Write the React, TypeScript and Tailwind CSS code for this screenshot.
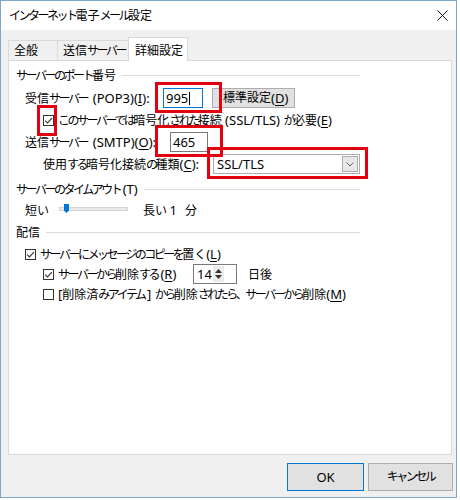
import React from "react"

const KANA = /[\u3040-\u30ff\u3001]/
const KANJI = /[\u4e00-\u9fff]/

// Japanese runs: kana are drawn narrower, like Yu Gothic UI
function J({ t }: { t: string }) {
  const parts = t.split(/([\u3040-\u30ff\u3001]+|[\u4e00-\u9fff]+)/).filter(Boolean)
  return (
    <>
      {parts.map((p, i) => {
        if (KANA.test(p)) {
          const next = parts[i + 1]
          const open = next !== undefined && !KANA.test(next) && !KANJI.test(next)
          return (
            <span key={i} className={open ? "mr-[2.5px] text-[12px] tracking-[-2.5px]" : "text-[12px] tracking-[-2.5px]"}>
              {p}
            </span>
          )
        }
        if (KANJI.test(p)) {
          return (
            <span key={i} className="text-[12px]">
              {p}
            </span>
          )
        }
        return <React.Fragment key={i}>{p}</React.Fragment>
      })}
    </>
  )
}

function Acc({ k }: { k: string }) {
  return <span className="underline decoration-1 underline-offset-[2px]">{k}</span>
}

function Check({ on = false }: { on?: boolean }) {
  return (
    <span className="flex h-[11px] w-[11px] shrink-0 items-center justify-center border border-[#333333] bg-white">
      {on && (
        <svg width="9" height="9" viewBox="0 0 9 9">
          <path d="M1.2 4.6 L3.5 6.9 L7.9 2.2" fill="none" stroke="#333333" strokeWidth="1.1" />
        </svg>
      )}
    </span>
  )
}

function Group({ title }: { title: string }) {
  return (
    <div className="flex h-[16px] w-[344px] items-center">
      <span className="whitespace-nowrap">
        <J t={title} />
      </span>
      <span className="ml-[6px] h-px flex-1 bg-[#dcdcdc]" />
    </div>
  )
}

// red annotation frames drawn over the dialog
function Mark({ className }: { className: string }) {
  return <div className={`pointer-events-none absolute z-20 border-[3px] border-[#e3000f] ${className}`} />
}

export default function App() {
  return (
    <div className="h-[500px] w-[460px] bg-white font-['Noto_Sans','Noto_Sans_CJK_JP',sans-serif] text-[13px] leading-none text-black">
      <div className="flex h-[498px] w-[457px] flex-col border border-[#7ea6c6] bg-[#f0f0f0]">
        {/* title bar */}
        <div className="flex h-[29px] shrink-0 items-center justify-between bg-white pl-[8px] pr-[8px]">
          <span>
            <J t="インターネット電子メール設定" />
          </span>
          <svg width="11" height="11" viewBox="0 0 11 11">
            <path d="M0.5 0.5 L10.5 10.5 M10.5 0.5 L0.5 10.5" stroke="#111111" strokeWidth="1" />
          </svg>
        </div>

        <div className="pl-[7px] pr-[4px] pt-[7px]">
          {/* tabs */}
          <div className="flex h-[23px] items-end">
            <div className="flex h-[20px] w-[50px] items-center border border-b-0 border-[#d9d9d9] pl-[5px]">
              <J t="全般" />
            </div>
            <div className="flex h-[20px] w-[71px] items-center border-t border-r border-[#d9d9d9] pl-[5px]">
              <J t="送信サーバー" />
            </div>
            <div className="relative z-10 -mb-px -ml-px flex h-[24px] w-[60px] items-center border border-b-0 border-[#d9d9d9] bg-white pl-[6px] pt-[2px]">
              <J t="詳細設定" />
            </div>
          </div>

          {/* tab panel */}
          <div className="relative h-[395px] border border-[#d9d9d9] bg-white pl-[7px] pt-[6px]">
            <Group title="サーバーのポート番号" />

            <div className="mt-[5px] flex h-[20px] items-center pl-[9px]">
              <span className="w-[138px] whitespace-nowrap">
                <J t="受信サーバー (POP3)(" />
                <Acc k="I" />
                ):
              </span>
              <div className="flex h-[20px] w-[40px] items-center border border-[#0078d7] bg-white pl-[2px]">
                <span>995</span>
                <span className="ml-px h-[13px] w-px bg-black" />
              </div>
              <div className="ml-[9px] flex h-[20px] w-[83px] items-center border border-[#adadad] bg-[#e1e1e1] pl-[10px]">
                <J t="標準設定(" />
                <Acc k="D" />)
              </div>
            </div>

            <div className="mt-[4px] flex h-[16px] items-center gap-[4px] pl-[27px]">
              <Check on />
              <span className="whitespace-nowrap">
                <J t="このサーバーでは暗号化された接続 (SSL/TLS) が必要(" />
                <Acc k="E" />)
              </span>
            </div>

            <div className="mt-[4px] flex h-[20px] items-center pl-[9px]">
              <span className="w-[145px] whitespace-nowrap">
                <J t="送信サーバー (SMTP)(" />
                <Acc k="O" />
                ):
              </span>
              <div className="flex h-[20px] w-[38px] items-center border border-[#7a7a7a] bg-white pl-[2px]">465</div>
            </div>

            <div className="mt-[2px] flex h-[20px] items-center pl-[27px]">
              <span className="w-[170px] whitespace-nowrap">
                <J t="使用する暗号化接続の種類(" />
                <Acc k="C" />
                ):
              </span>
              <div className="flex h-[20px] w-[147px] items-center border border-[#adadad] bg-white pl-[3px]">
                <span className="flex-1">SSL/TLS</span>
                <div className="mr-px flex h-[16px] w-[16px] items-center justify-center border border-[#adadad] bg-[#e8e8e8]">
                  <svg width="8" height="5" viewBox="0 0 8 5">
                    <path d="M0.5 0.5 L4 4 L7.5 0.5" fill="none" stroke="#606060" strokeWidth="1" />
                  </svg>
                </div>
              </div>
            </div>

            <div className="mt-[7px]">
              <Group title="サーバーのタイムアウト(T)" />
            </div>

            <div className="mt-[5px] flex h-[16px] items-center pl-[9px]">
              <span className="w-[34px]">
                <J t="短い" />
              </span>
              <div className="relative mb-[3px] h-[4px] w-[69px] border border-[#d6d6d6] bg-[#e7eaea]">
                <svg className="absolute left-[4px] top-[-4px]" width="5" height="9" viewBox="0 0 5 9">
                  <path d="M0 0 H5 V6.5 L2.5 9 L0 6.5 Z" fill="#0078d7" />
                </svg>
              </div>
              <span className="ml-[15px]">
                <J t="長い" />
              </span>
              <span className="ml-[5px]">1</span>
              <span className="ml-[8px]">
                <J t="分" />
              </span>
            </div>

            <div className="mt-[6px]">
              <Group title="配信" />
            </div>

            <div className="mt-[6px] flex h-[16px] items-center gap-[4px] pl-[9px]">
              <Check on />
              <span className="whitespace-nowrap">
                <J t="サーバーにメッセージのコピーを置く(" />
                <Acc k="L" />)
              </span>
            </div>

            <div className="mt-[2px] flex h-[20px] items-center pl-[27px]">
              <Check on />
              <span className="ml-[4px] w-[135px] whitespace-nowrap">
                <J t="サーバーから削除する(" />
                <Acc k="R" />)
              </span>
              <div className="flex h-[20px] w-[44px] items-center border border-[#7a7a7a] bg-white pl-[3px]">
                <span className="w-[16px]">14</span>
                <div className="flex h-[16px] w-[11px] flex-col items-center justify-center gap-[2px] bg-[#ececec]">
                  <svg width="7" height="4" viewBox="0 0 7 4">
                    <path d="M0 4 L3.5 0 L7 4 Z" fill="#333333" />
                  </svg>
                  <svg width="7" height="4" viewBox="0 0 7 4">
                    <path d="M0 0 L3.5 4 L7 0 Z" fill="#333333" />
                  </svg>
                </div>
              </div>
              <span className="ml-[11px]">
                <J t="日後" />
              </span>
            </div>

            <div className="mt-[2px] flex h-[16px] items-center gap-[4px] pl-[27px]">
              <Check />
              <span className="whitespace-nowrap">
                <J t="[削除済みアイテム] から削除されたら、サーバーから削除(" />
                <Acc k="M" />)
              </span>
            </div>

            <Mark className="left-[146px] top-[21px] h-[31px] w-[67px]" />
            <Mark className="left-[28px] top-[44px] h-[31px] w-[20px]" />
            <Mark className="left-[146px] top-[64px] h-[32px] w-[68px]" />
            <Mark className="left-[198px] top-[86px] h-[32px] w-[161px]" />
          </div>

          {/* dialog buttons */}
          <div className="-mr-px mt-[8px] flex justify-end gap-[4px]">
            <div className="flex h-[28px] w-[77px] items-center justify-center border border-[#0078d7] bg-[#e1e1e1]">OK</div>
            <div className="flex h-[28px] w-[85px] items-center justify-center border border-[#adadad] bg-[#e1e1e1]">
              <J t="キャンセル" />
            </div>
          </div>
        </div>
      </div>
    </div>
  )
}
